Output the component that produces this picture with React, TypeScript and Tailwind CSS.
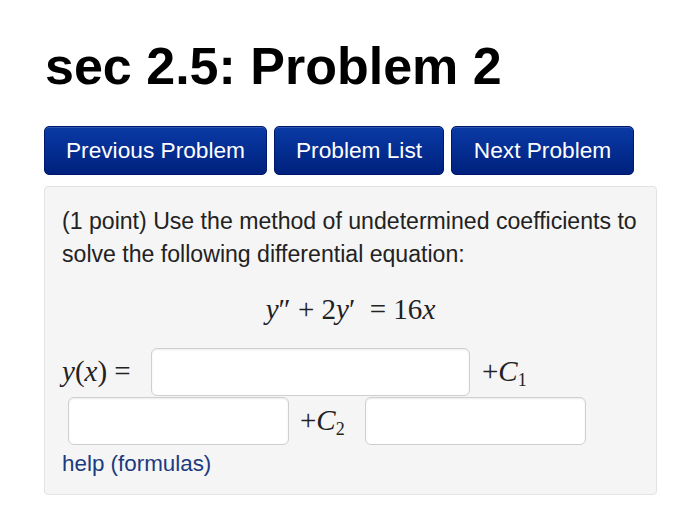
import React from "react";

const sans = { fontFamily: '"Liberation Sans", Arial, sans-serif' };
const serif = { fontFamily: '"Liberation Serif", "Times New Roman", serif' };

function NavButton({ label, width }: { label: string; width: string }) {
  return (
    <button
      className={`${width} h-[49px] rounded-[5px] border border-[#00176e] bg-gradient-to-b from-[#0b3aa6] to-[#00217d] text-[22.7px] text-white shadow-[inset_0_1px_0_rgba(255,255,255,0.15)]`}
    >
      {label}
    </button>
  );
}

function Field({ width }: { width: string }) {
  return (
    <input
      className={`${width} h-[48px] rounded-[6px] border border-[#cfcfcf] bg-white shadow-[inset_0_1px_2px_rgba(0,0,0,0.08)] outline-none`}
    />
  );
}

export default function App() {
  return (
    <div className="h-[514px] w-[700px] bg-white text-[#222]" style={sans}>
      <div className="pl-[44px] pr-[43px] pt-[36px]">
        {/* Title */}
        <h1 className="pl-[1px] text-[52px] font-bold leading-[60px] text-black">
          sec 2.5: Problem 2
        </h1>

        {/* Nav */}
        <div className="mt-[30px] flex gap-[7px]">
          <NavButton label="Previous Problem" width="w-[223px]" />
          <NavButton label="Problem List" width="w-[170px]" />
          <NavButton label="Next Problem" width="w-[183px]" />
        </div>

        {/* Problem panel */}
        <div className="mt-[11px] h-[309px] rounded-[4px] border border-[#e3e3e3] bg-[#f5f5f5] px-[17px] pt-[18px]">
          <p className="text-[23.1px] leading-[33px] text-[#222]">
            (1 point) Use the method of undetermined coefficients to solve the following differential equation:
          </p>

          <div className="mt-[21px] text-center text-[29px] leading-[34px]" style={serif}>
            <i>y</i>″ + 2<i>y</i>′ &nbsp;= 16<i>x</i>
          </div>

          <div className="mt-[22px] text-[29px]" style={serif}>
            <div className="flex items-center">
              <span className="w-[89px]">
                <i>y</i>(<i>x</i>)&nbsp;=
              </span>
              <Field width="w-[319px]" />
              <span className="ml-[12px]">
                +<i>C</i>
                <sub className="text-[18px]">1</sub>
              </span>
            </div>
            <div className="mt-[1px] flex items-center pl-[6px]">
              <Field width="w-[221px]" />
              <span className="ml-[11px] w-[65px]">
                +<i>C</i>
                <sub className="text-[18px]">2</sub>
              </span>
              <Field width="w-[221px]" />
            </div>
          </div>

          <a href="#" className="mt-[4px] block text-[22.4px] leading-[30px] text-[#1c3a80]" style={sans}>
            help (formulas)
          </a>
        </div>
      </div>
    </div>
  );
}
